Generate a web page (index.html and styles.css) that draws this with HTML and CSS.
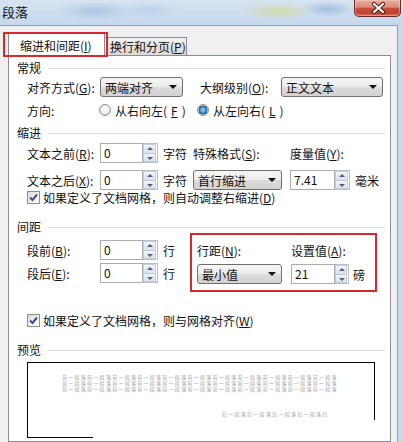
FILE: index.html
```html
<!DOCTYPE html>
<html lang="zh-CN">
<head>
<meta charset="utf-8">
<title>段落</title>
<link rel="stylesheet" href="styles.css">
</head>
<body>
<div class="window">
  <div class="titlebar">
    <span class="title">段落</span>
    <div class="close">
      <svg width="47" height="16" viewBox="0 0 47 16">
        <g transform="translate(23.5 8)">
          <path d="M-4.5 -4 L4.5 4 M4.5 -4 L-4.5 4" stroke="#4a1c16" stroke-width="4.2" stroke-linecap="round"/>
          <path d="M-4.5 -4 L4.5 4 M4.5 -4 L-4.5 4" stroke="#ffffff" stroke-width="2.2" stroke-linecap="round"/>
        </g>
      </svg>
    </div>
  </div>
  <div class="frame">
    <div class="client">
      <div class="tabs">
        <div class="tab tab-active">缩进和间距(<u>I</u>)</div>
        <div class="tab tab-idle">换行和分页(<u>P</u>)</div>
        <div class="tab-mark"></div>
      </div>
      <div class="panel">
        <div class="group-title group-general">常规</div>
        <div class="row row-first">
          <span class="lbl lbl-main">对齐方式(<u>G</u>):</span>
          <div class="select select-align"><span>两端对齐</span><i class="arrow"></i></div>
          <span class="lbl lbl-outline">大纲级别(<u>O</u>):</span>
          <div class="select select-outline"><span>正文文本</span><i class="arrow"></i></div>
        </div>
        <div class="row row-radio">
          <span class="lbl lbl-dir">方向:</span>
          <span class="radio-item radio-rtl"><i class="radio"></i>从右向左(<u>F</u>)</span>
          <span class="radio-item"><i class="radio radio-on"></i>从左向右(<u>L</u>)</span>
        </div>

        <div class="group-title group-indent">缩进</div>
        <div class="row row-indent1">
          <span class="lbl lbl-main">文本之前(<u>R</u>):</span>
          <div class="spin"><span class="spin-box">0</span><span class="spin-btns"><i class="up"></i><i class="down"></i></span></div>
          <span class="unit unit-char">字符</span>
          <span class="lbl lbl-special">特殊格式(<u>S</u>):</span>
          <span class="lbl">度量值(<u>Y</u>):</span>
        </div>
        <div class="row row-indent2">
          <span class="lbl lbl-main">文本之后(<u>X</u>):</span>
          <div class="spin"><span class="spin-box">0</span><span class="spin-btns"><i class="up"></i><i class="down"></i></span></div>
          <span class="unit unit-char2">字符</span>
          <div class="select select-special"><span>首行缩进</span><i class="arrow"></i></div>
          <div class="spin spin-measure"><span class="spin-box">7.41</span><span class="spin-btns"><i class="up"></i><i class="down"></i></span></div>
          <span class="unit unit-mm">毫米</span>
        </div>
        <div class="row row-check1">
          <i class="check"><svg width="11" height="11" viewBox="0 0 11 11"><path d="M2 5.5 L4.5 8 L9 2.5" fill="none" stroke="#3f4f86" stroke-width="2"/></svg></i>
          <span>如果定义了文档网格，则自动调整右缩进(<u>D</u>)</span>
        </div>

        <div class="group-title group-spacing">间距</div>
        <div class="spacing">
          <div class="spacing-left">
            <div class="row row-plain">
              <span class="lbl lbl-main">段前(<u>B</u>):</span>
              <div class="spin"><span class="spin-box">0</span><span class="spin-btns"><i class="up"></i><i class="down"></i></span></div>
              <span class="unit unit-line">行</span>
            </div>
            <div class="row row-plain">
              <span class="lbl lbl-main">段后(<u>E</u>):</span>
              <div class="spin"><span class="spin-box">0</span><span class="spin-btns"><i class="up"></i><i class="down"></i></span></div>
              <span class="unit unit-line">行</span>
            </div>
          </div>
          <div class="line-box">
            <div class="line-box-labels">
              <span class="lbl lbl-linespace">行距(<u>N</u>):</span>
              <span class="lbl">设置值(<u>A</u>):</span>
            </div>
            <div class="line-box-controls">
              <div class="select select-line"><span>最小值</span><i class="arrow"></i></div>
              <div class="spin spin-at"><span class="spin-box">21</span><span class="spin-btns"><i class="up"></i><i class="down"></i></span></div>
              <span class="unit unit-pt">磅</span>
            </div>
          </div>
        </div>
        <div class="row row-check2">
          <i class="check"><svg width="11" height="11" viewBox="0 0 11 11"><path d="M2 5.5 L4.5 8 L9 2.5" fill="none" stroke="#3f4f86" stroke-width="2"/></svg></i>
          <span>如果定义了文档网格，则与网格对齐(<u>W</u>)</span>
        </div>

        <div class="group-title group-preview">预览</div>
        <div class="preview">
          <div class="preview-page">
            <div class="preview-prev">前一段落前一段落前一段落前一段落前一段落前一段落前一段落前一段落前一段落前一段落前一段落</div>
            <div class="preview-prev">前一段落前一段落前一段落前一段落前一段落前一段落前一段落前一段落前一段落前一段落前一段落</div>
            <div class="preview-prev">前一段落前一段落前一段落前一段落前一段落前一段落前一段落前一段落前一段落前一段落前一段落</div>
            <div class="preview-next">后一段落后一段落后一段落后一段落后</div>
          </div>
          <div class="preview-foot"></div>
        </div>
      </div>
    </div>
  </div>
</div>
</body>
</html>
```

FILE: styles.css
```css
* { box-sizing: border-box; }
html, body { margin: 0; padding: 0; }
body {
  width: 403px;
  height: 442px;
  overflow: hidden;
  font-family: "Noto Sans CJK SC", "Noto Sans", sans-serif;
  font-size: 12px;
  color: #111;
  background: #c8dbef;
}
u { text-decoration: underline; text-underline-offset: 1px; }
i { font-style: normal; }

.window { display: flex; flex-direction: column; height: 442px; }

.titlebar {
  position: relative;
  flex: none;
  height: 25px;
  padding-left: 2px;
  line-height: 24px;
  background:
    radial-gradient(ellipse 40px 9px at 95px 11px, rgba(160,190,222,.75), transparent),
    radial-gradient(ellipse 30px 8px at 150px 10px, rgba(175,200,228,.6), transparent),
    radial-gradient(ellipse 38px 9px at 278px 11px, rgba(208,220,150,.75), transparent),
    radial-gradient(ellipse 26px 8px at 328px 9px, rgba(150,182,220,.8), transparent),
    linear-gradient(#d7e3f1, #c6d8ec);
}
.title { font-size: 13px; color: #111; }
.close {
  position: absolute;
  top: 0;
  right: 2px;
  width: 47px;
  height: 17px;
  border: 1px solid #6a2b22;
  border-top: none;
  border-radius: 0 0 5px 5px;
  background: linear-gradient(#e9ad9f 0%, #da8a77 45%, #c5503c 52%, #c0402c 80%, #d56d58 100%);
  box-shadow: inset 0 0 0 1px rgba(255,210,200,.45);
}
.close svg { display: block; }

.frame { flex: 1; display: flex; padding-right: 5px; }
.client {
  flex: 1;
  display: flex;
  flex-direction: column;
  background: #f0f0f0;
  border-top: 1px solid #8ea1b9;
  border-right: 1px solid #8ea1b9;
  min-height: 0;
}

.tabs {
  position: relative;
  flex: none;
  display: flex;
  align-items: flex-end;
  height: 29px;
  padding-left: 8px;
}
.tab {
  border: 1px solid #898c95;
  border-bottom: none;
  white-space: nowrap;
  display: flex;
  align-items: center;
}
.tab-active {
  position: relative;
  z-index: 2;
  width: 97px;
  height: 23px;
  margin-bottom: -1px;
  padding-left: 11px;
  background: #fff;
}
.tab-idle {
  width: 83px;
  height: 18px;
  margin-left: -1px;
  padding-left: 5px;
  background: linear-gradient(#f3f3f3, #e3e3e3 50%, #d9d9d9);
}
.tab-mark {
  position: absolute;
  z-index: 3;
  left: 3px;
  top: 6px;
  width: 105px;
  height: 25px;
  border: 2px solid #d9272e;
}

.panel {
  flex: 1;
  margin: 0 6px 0 8px;
  border: 1px solid #898c95;
  background: #fff;
  padding: 0 5px 0 8px;
}

.group-title {
  display: flex;
  align-items: center;
  gap: 7px;
  height: 14px;
  line-height: 14px;
}
.group-title::after {
  content: "";
  flex: 1;
  border-top: 1px solid #d5dce3;
}
.group-general { margin-top: 5px; }
.group-indent { margin-top: 9px; }
.group-spacing { margin-top: 16px; }
.group-preview { margin-top: 16px; }

.row {
  display: flex;
  align-items: center;
  height: 20px;
  margin-left: 10px;
  white-space: nowrap;
}
.row-first { margin-top: 2px; }
.row-radio { margin-top: 6px; height: 14px; }
.row-indent1 { margin-top: 3px; }
.row-indent2 { margin-top: 7px; }
.row-check1 { margin-top: 1px; height: 13px; }
.row-check2 { margin-top: 21px; height: 14px; }
.row-plain { margin-left: 0; }

.lbl { flex: none; }
.lbl-main { width: 73px; }
.lbl-outline { width: 81px; margin-left: 17px; }
.lbl-dir { width: 72px; }
.lbl-special { width: 97px; margin-left: 6px; }
.lbl-linespace { width: 94px; }

.unit { flex: none; }
.unit-char { margin-left: 5px; width: 24px; }
.unit-char2 { margin-left: 5px; width: 30px; }
.unit-mm { margin-left: 5px; }
.unit-line { margin-left: 5px; }
.unit-pt { margin-left: 4px; }

.select {
  position: relative;
  flex: none;
  height: 20px;
  border: 1px solid #707070;
  border-radius: 3px;
  background: linear-gradient(#f6f6f6, #ebebeb 50%, #dcdcdc 51%, #d2d2d2);
  padding-left: 4px;
  display: flex;
  align-items: center;
  color: #111;
}
.arrow {
  position: absolute;
  right: 5px;
  top: 7px;
  width: 0;
  height: 0;
  border-left: 4px solid transparent;
  border-right: 4px solid transparent;
  border-top: 4px solid #111;
}
.select-align { width: 83px; }
.select-outline { width: 102px; }
.select-special { width: 89px; }
.select-line { width: 85px; }

.spin { flex: none; display: flex; height: 20px; }
.spin-box {
  width: 43px;
  height: 20px;
  border: 1px solid #a9acb3;
  background: #fff;
  padding-left: 3px;
  line-height: 18px;
}
.spin-btns {
  width: 15px;
  height: 20px;
  display: flex;
  flex-direction: column;
  border: 1px solid #b5c0cd;
  border-left: none;
  background: #fff;
}
.spin-btns i {
  flex: 1;
  position: relative;
  margin: 0 1px 0 0;
  background: linear-gradient(#f2f5f9, #d9e2ec);
  border: 1px solid #c3ccd8;
}
.spin-btns .up { border-bottom-width: 0; }
.spin-btns i::after {
  content: "";
  position: absolute;
  left: 3px;
  width: 0;
  height: 0;
  border-left: 3px solid transparent;
  border-right: 3px solid transparent;
}
.spin-btns .up::after { top: 2px; border-bottom: 3px solid #4e5f7c; }
.spin-btns .down::after { top: 3px; border-top: 3px solid #4e5f7c; }
.spin-measure { margin-left: 8px; }
.spin-measure .spin-box { width: 45px; }
.spin-at { margin-left: 9px; }
.spin-at .spin-box { width: 44px; }
.spin-at .spin-btns { width: 14px; }

.radio-item { display: flex; align-items: center; gap: 4px; }
.radio-rtl { width: 98px; }
.radio {
  flex: none;
  width: 12px;
  height: 12px;
  border-radius: 50%;
  border: 1px solid #8e8f8f;
  background: radial-gradient(circle at 50% 40%, #ffffff 0%, #f0f0f0 45%, #d2d2d2 100%);
}
.radio-on {
  background:
    radial-gradient(circle at 50% 50%, #9fdcff 0%, #3f93d6 40%, #1c5590 62%, transparent 66%),
    radial-gradient(circle at 50% 40%, #ffffff 0%, #f0f0f0 45%, #d2d2d2 100%);
}

.check {
  flex: none;
  width: 13px;
  height: 13px;
  margin-right: 3px;
  border: 1px solid #8e8f8f;
  background: linear-gradient(135deg, #dcdcdc, #ffffff);
  display: flex;
  align-items: center;
  justify-content: center;
}
.check svg { display: block; }

.spacing {
  display: flex;
  height: 59px;
  margin: -1px 0 0 10px;
}
.spacing-left {
  width: 163px;
  padding-top: 7px;
  display: flex;
  flex-direction: column;
  gap: 3px;
}
.line-box {
  width: 187px;
  height: 59px;
  border: 2px solid #d9272e;
  padding-left: 5px;
  white-space: nowrap;
}
.line-box-labels {
  display: flex;
  align-items: center;
  height: 14px;
  margin-top: 8px;
}
.line-box-controls {
  display: flex;
  align-items: center;
  height: 20px;
  margin-top: 7px;
}

.preview {
  width: 348px;
  margin: 5px 0 0 10px;
  border-left: 1px solid #000;
  border-top: 1px solid #000;
}
.preview-page {
  height: 57px;
  border-right: 1px solid #000;
  padding: 11px 0 0 34px;
}
.preview-prev, .preview-next {
  font-size: 5px;
  line-height: 6px;
  height: 6px;
  color: #9c9c9c;
  letter-spacing: 1.27px;
  white-space: nowrap;
}
.preview-next { margin: 19px 0 0 160px; }
.preview-foot {
  width: 65px;
  height: 18px;
  border-bottom: 1px solid #000;
}
```
